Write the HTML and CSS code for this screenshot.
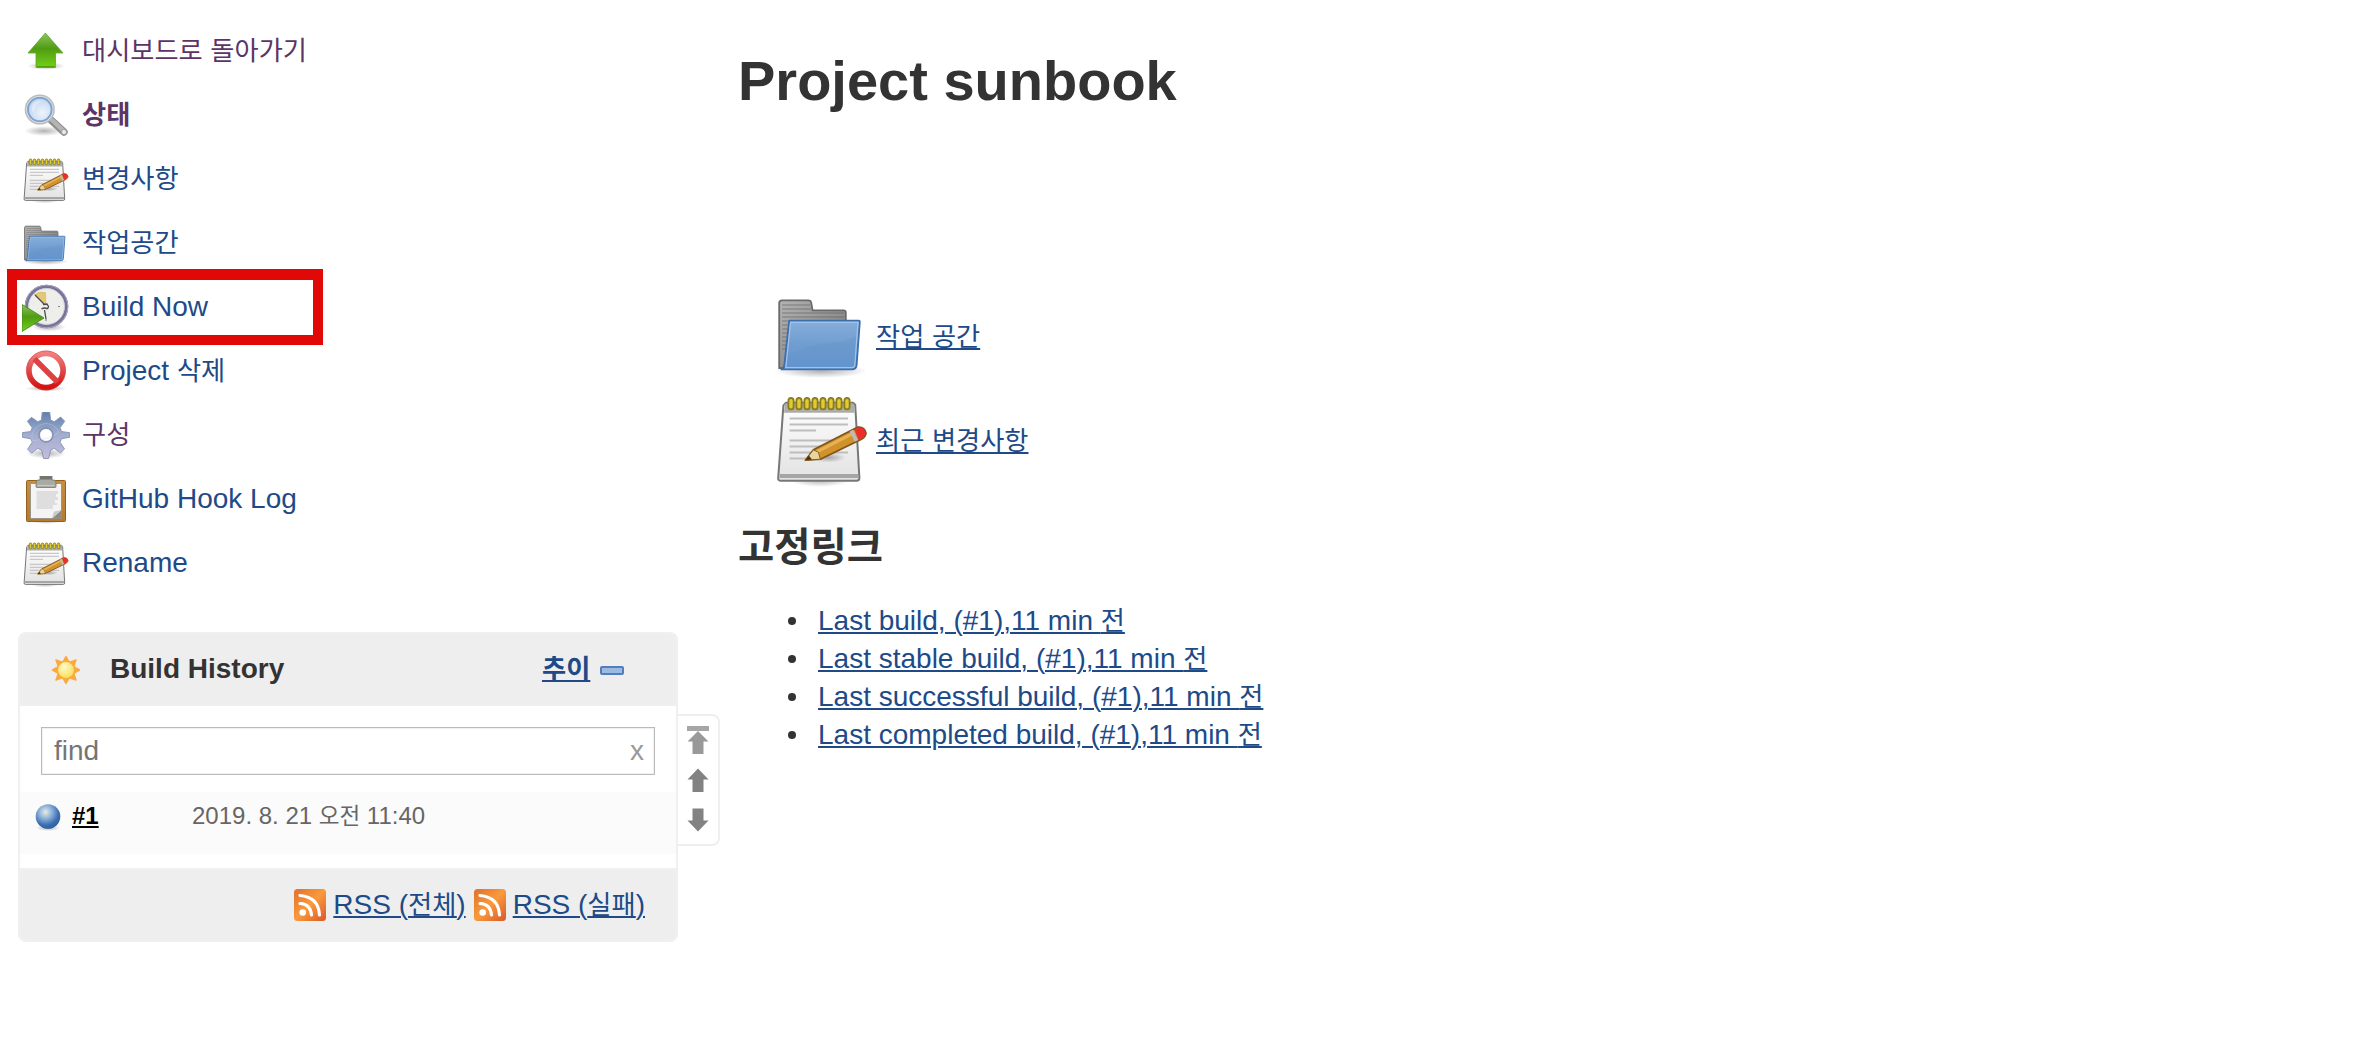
FILE: index.html
```html
<!DOCTYPE html>
<html lang="ko">
<head>
<meta charset="utf-8">
<title>sunbook [Jenkins]</title>
<link rel="stylesheet" href="styles.css">
</head>
<body>
<svg class="defs" aria-hidden="true">
  <defs>
    <linearGradient id="green" x1="0" y1="0" x2="0" y2="1"><stop offset="0" stop-color="#8fc45f"/><stop offset=".45" stop-color="#4f9c13"/><stop offset="1" stop-color="#72d216"/></linearGradient>
    <linearGradient id="blue" x1="0" y1="0" x2="0" y2="1"><stop offset="0" stop-color="#86aedb"/><stop offset=".5" stop-color="#709dd0"/><stop offset="1" stop-color="#6496cf"/></linearGradient>
    <linearGradient id="grey" x1="0" y1="0" x2="1" y2="1"><stop offset="0" stop-color="#b4b4b4"/><stop offset="1" stop-color="#737373"/></linearGradient>
    <linearGradient id="paper" x1="0" y1="0" x2="0" y2="1"><stop offset="0" stop-color="#ffffff"/><stop offset="1" stop-color="#e2e2e2"/></linearGradient>
    <linearGradient id="red" x1="0" y1="0" x2="0" y2="1"><stop offset="0" stop-color="#f08080"/><stop offset=".5" stop-color="#e04848"/><stop offset="1" stop-color="#d31212"/></linearGradient>
    <linearGradient id="gearfill" x1="0" y1="0" x2="0" y2="1"><stop offset="0" stop-color="#5f7fab"/><stop offset=".5" stop-color="#a3afd0"/><stop offset="1" stop-color="#c4bbdc"/></linearGradient>
    <linearGradient id="wood" x1="0" y1="0" x2="0" y2="1"><stop offset="0" stop-color="#c88f40"/><stop offset="1" stop-color="#b57a2c"/></linearGradient>
    <linearGradient id="rssfill" x1="0" y1="0" x2="1" y2="1"><stop offset="0" stop-color="#e0702e"/><stop offset=".5" stop-color="#f99a3c"/><stop offset="1" stop-color="#d9572a"/></linearGradient>
    <radialGradient id="lens" cx=".6" cy=".65" r=".7"><stop offset="0" stop-color="#eef4fc"/><stop offset="1" stop-color="#bcd3ee"/></radialGradient>
    <radialGradient id="ball" cx=".4" cy=".32" r=".7"><stop offset="0" stop-color="#e6eddf"/><stop offset=".35" stop-color="#94b6dc"/><stop offset=".75" stop-color="#3b70b3"/><stop offset="1" stop-color="#2f5d9a"/></radialGradient>
    <radialGradient id="sunfill" cx=".4" cy=".35" r=".7"><stop offset="0" stop-color="#fffbc8"/><stop offset="1" stop-color="#f8dc4c"/></radialGradient>
    <radialGradient id="shade"><stop offset="0" stop-color="#000" stop-opacity=".3"/><stop offset="1" stop-color="#000" stop-opacity="0"/></radialGradient>
  </defs>

  <symbol id="up" viewBox="0 0 48 48">
    <ellipse cx="24" cy="38" rx="19" ry="4" fill="url(#shade)"/>
    <path d="M23.400 5 41 25H33.500V39.500H14V25H6Z" fill="url(#green)" stroke="#5fa52c" stroke-width=".8" stroke-linejoin="round"/>
    <path d="M15 38.700H32.500" stroke="#4e9a06" stroke-width="1.200"/>
  </symbol>

  <symbol id="search" viewBox="0 0 48 48">
    <ellipse cx="22" cy="39" rx="20" ry="5" fill="url(#shade)"/>
    <path d="M29 28 42 40" stroke="#8e8e8e" stroke-width="7.400" stroke-linecap="round"/>
    <path d="M30 28 41.500 39" stroke="#b5b5b5" stroke-width="4.400" stroke-linecap="round"/>
    <circle cx="42" cy="40" r="2.500" fill="#ededed" stroke="#999" stroke-width=".8"/>
    <circle cx="17.800" cy="17.500" r="14.300" fill="#e9e9e9" stroke="#bcbcbc" stroke-width="1.600"/>
    <circle cx="17.800" cy="17.500" r="11.800" fill="url(#lens)" stroke="#7da3d4" stroke-width="2"/>
    <path d="M9.500 17C9.500 11 14.500 8 19.500 9.500 13.500 12 12.500 15 12 22Z" fill="#fff" opacity=".35"/>
  </symbol>

  <symbol id="notepad" viewBox="0 0 48 48">
    <ellipse cx="23" cy="44" rx="15" ry="3.500" fill="url(#shade)"/>
    <path d="M6 5.400H39.500L40.600 6.400 42.700 43Q42.700 44.400 41.300 44.400H3.500Q2 44.400 2.100 43L4.700 6.700Z" fill="url(#paper)" stroke="#777" stroke-width="1"/>
    <path d="M5.400 5.900H40L40.300 10.400H5Z" fill="#adada8"/>
    <path d="M2.900 41H42V43H2.800Z" fill="#a5a5a5"/>
    <g stroke="#bdbdbd" stroke-width="1"><path d="M7.800 13.300H37M7.800 16.300H37M7.800 19.300H21M7.800 24.300H37M7.800 27.300H32M7.800 30.300H37M7.800 33.300H24"/></g>
    <g fill="#dfcc35" stroke="#8d7c17" stroke-width=".9"><rect x="7.200" y="3" width="2.600" height="5.700" rx="1.300"/><rect x="11.200" y="3" width="2.600" height="5.700" rx="1.300"/><rect x="15.200" y="3" width="2.600" height="5.700" rx="1.300"/><rect x="19.200" y="3" width="2.600" height="5.700" rx="1.300"/><rect x="23.200" y="3" width="2.600" height="5.700" rx="1.300"/><rect x="27.200" y="3" width="2.600" height="5.700" rx="1.300"/><rect x="31.200" y="3" width="2.600" height="5.700" rx="1.300"/><rect x="35.200" y="3" width="2.600" height="5.700" rx="1.300"/></g>
    <ellipse cx="27" cy="32.800" rx="9" ry="2.500" fill="url(#shade)"/>
    <g transform="translate(-.8 -.9)">
      <path d="M16.500 35 20.500 29.800 42.500 18.500Q46 18 46.800 21.500 46.500 23.500 44.500 24.500L24 34.500Z" fill="#d1922c" stroke="#80541a" stroke-width=".9" stroke-linejoin="round"/>
      <path d="M22 31 41 21.200" stroke="#e8b254" stroke-width="1.600"/>
      <path d="M16.500 35 20.500 29.800 23 31 24 34.500Z" fill="#ead59c" stroke="#8b5d1c" stroke-width=".5"/>
      <path d="M16.500 35 18.200 32.600 19.800 34.600Z" fill="#4b3210"/>
      <path d="M39.500 20.200 42 25.400" stroke="#bcbcbc" stroke-width="1.800"/>
      <path d="M41 19.500 43.300 18.700Q46 18.600 46.500 21.500 46.300 23.200 43 24.800Z" fill="#ee2c2c"/>
    </g>
  </symbol>

  <symbol id="folder" viewBox="0 0 48 48">
    <ellipse cx="23.500" cy="41.500" rx="23" ry="3.500" fill="url(#shade)"/>
    <path d="M2.600 40V7.500Q2.600 6.200 4 6.200H17.200Q18.400 6.200 18.600 7.300L19.300 11.200H34.800Q35.900 11.200 35.900 12.200V20L35 40H4Z" fill="url(#grey)" stroke="#6a6a6a" stroke-width=".9"/>
    <path d="M4 8.500H18M4 10.500H18.500M4 12.500H35M4 14.500H35M4 16.500H7M4 18.500H7M4 20.500H7M4 22.500H7M4 24.500H7M4 26.500H6M4 28.500H6M4 30.500H6" stroke="#5c5c5c" stroke-width=".5" opacity=".6"/>
    <path d="M7.600 16.300H42.400Q43 16.300 42.900 17L41.300 38.700Q41 40.700 39 40.700H3.700Q5 40.200 5.200 38.300Z" fill="url(#blue)" stroke="#3b6fae" stroke-width=".9" stroke-linejoin="round"/>
    <path d="M8.300 17.200H42L40.400 38.600Q40.100 39.800 39 39.800H5.900Z" fill="none" stroke="#a5c3e6" stroke-width=".6"/>
    <path d="M7 33C17 30 20 28 28 27.500 34 27 38 26 41 24L40 38Q40 39.500 38 39.500H6.500Z" fill="#5a8dca" opacity=".22"/>
  </symbol>

  <symbol id="clock" viewBox="0 0 48 48">
    <ellipse cx="27" cy="43" rx="17" ry="4.500" fill="url(#shade)"/>
    <circle cx="24.500" cy="22.500" r="20" fill="#eeeeea" stroke="#77739a" stroke-width="3.600"/>
    <circle cx="24.500" cy="22.500" r="21.300" fill="none" stroke="#a9a7bd" stroke-width="1"/>
    <circle cx="24.500" cy="22.500" r="17.900" fill="none" stroke="#cfcfd4" stroke-width=".8"/>
    <path d="M12.500 10.500Q18 7 23.500 8.500L24 21.500Z" fill="#e3c976" stroke="#cfb055" stroke-width=".5"/>
    <path d="M13 11 22 20M21 20.500l4-.5 1.500 2.500-1 2.500M25.500 25q-3-2-6 0M22.500 26l1.500 9" fill="none" stroke="#4a4a4a" stroke-width="1.300"/>
    <path d="M36 22.500h2M24 35v2" stroke="#888" stroke-width="1.200"/>
    <path d="M0 20.500V47.500L22 34Z" fill="url(#green)" stroke="#4a8c1c" stroke-width=".9"/>
  </symbol>

  <symbol id="stop" viewBox="0 0 48 48">
    <ellipse cx="24" cy="40.500" rx="21" ry="3" fill="url(#shade)"/>
    <circle cx="24" cy="22.500" r="17" fill="#fff" stroke="url(#red)" stroke-width="5.500"/>
    <path d="M12.500 11 35.500 34" stroke="#dd4242" stroke-width="5.500"/>
    <circle cx="24" cy="22.500" r="19.600" fill="none" stroke="#d44" stroke-width=".6"/>
  </symbol>

  <symbol id="gear" viewBox="0 0 48 48">
    <ellipse cx="24" cy="41.500" rx="20" ry="5" fill="url(#shade)"/>
    <path fill-rule="evenodd" d="M20.300 0H27.700L28.700 8.200 32.300 9.700 38.600 5 42.700 9.200 38 15.800 39.500 19.500 47.700 20.700V25.300L39.500 26.700 38 30.300 42.500 36.800 38.500 41 32.300 36.300 28.700 38 26.600 46.500H21.600L19.500 38 15.700 36.300 9.600 41.200 5.600 37.200 10.200 30.300 8.600 26.700.3 25.300V20.700L8.600 19.500 10.200 15.800 5.400 9.300 9.400 5.300 15.700 9.700 19.400 8.200ZM24 16.500A6.500 6.500 0 1 0 24 29.500 6.500 6.500 0 1 0 24 16.500Z" fill="url(#gearfill)" stroke="#8392b4" stroke-width=".9" stroke-linejoin="round"/>
    <path d="M10 22Q14 12 24 11.500 33 12 37 20 30 27 10 29Z" fill="none" stroke="#c7d0e4" stroke-width=".7" opacity=".6"/>
    <circle cx="24" cy="23" r="7.200" fill="none" stroke="#8089ac" stroke-width="1"/>
  </symbol>

  <symbol id="clipboard" viewBox="0 0 48 48">
    <ellipse cx="24" cy="45" rx="17" ry="3" fill="url(#shade)"/>
    <rect x="4.500" y="4.500" width="39" height="41" rx="1" fill="url(#wood)" stroke="#93601e" stroke-width="1"/>
    <path d="M8.500 7.500H39.500V42.500H8.500Z" fill="#f4f4f4" stroke="#858585" stroke-width=".7"/>
    <path d="M14.500 15H36V18H34V21H36V24H33V27H35V29H31V33H14.500Z" fill="#dedede"/>
    <path d="M30 42.500 39.500 34V42.500Z" fill="#8c8c80"/>
    <path d="M30 42.500 32 35.500 39.500 34Z" fill="#c9c9c9"/>
    <path d="M18 0H30V4H32Q34 4 34 7V10.500Q34 11.500 33 11.500H15Q14 11.500 14 10.500V7Q14 4 16 4H18Z" fill="#a8aaa3" stroke="#73756d" stroke-width=".8"/>
    <path d="M18 0H30V3.500H18Z" fill="#74766d"/>
    <path d="M15.500 9.500H32.500" stroke="#c7c9c2" stroke-width="1.200"/>
  </symbol>

  <symbol id="sun" viewBox="0 0 30 30">
    <path d="M15 1.500 17.500 6 12.500 6ZM15 28.500 17.500 24 12.500 24ZM1.500 15 6 12.500 6 17.500ZM28.500 15 24 12.500 24 17.500ZM5 5 10.500 7 7 10.500ZM25 5 23 10.500 19.500 7ZM5 25 7 19.500 10.500 23ZM25 25 19.500 23 23 19.500Z" fill="#fba940" stroke="#fba940" stroke-width="1.500" stroke-linejoin="round"/>
    <circle cx="15" cy="15" r="8.800" fill="url(#sunfill)" stroke="#fbac3e" stroke-width="1.800"/>
  </symbol>

  <symbol id="orb" viewBox="0 0 28 28">
    <ellipse cx="14" cy="25" rx="12" ry="3" fill="url(#shade)"/>
    <circle cx="14" cy="13.500" r="12.300" fill="url(#ball)"/>
  </symbol>

  <symbol id="rss" viewBox="0 0 32 32">
    <rect width="32" height="32" rx="3.500" fill="url(#rssfill)"/>
    <circle cx="8.700" cy="23.500" r="3.300" fill="#fff"/>
    <path d="M6 14.500Q16.500 15 17.500 26M6 6.500Q24.500 8 25.500 26" fill="none" stroke="#fff" stroke-width="3.200" stroke-linecap="round"/>
  </symbol>
</svg>

<div class="page">
  <aside class="side">
    <nav class="tasks">
      <a class="task visited" href="#"><svg class="icon"><use href="#up"/></svg><span class="label"><span class="ko">대시보드로 돌아가기</span></span></a>
      <a class="task visited current" href="#"><svg class="icon"><use href="#search"/></svg><span class="label"><span class="ko">상태</span></span></a>
      <a class="task" href="#"><svg class="icon"><use href="#notepad"/></svg><span class="label"><span class="ko">변경사항</span></span></a>
      <a class="task" href="#"><svg class="icon"><use href="#folder"/></svg><span class="label"><span class="ko">작업공간</span></span></a>
      <a class="task marked" href="#"><svg class="icon"><use href="#clock"/></svg><span class="label">Build Now</span></a>
      <a class="task" href="#"><svg class="icon"><use href="#stop"/></svg><span class="label">Project <span class="ko">삭제</span></span></a>
      <a class="task visited" href="#"><svg class="icon"><use href="#gear"/></svg><span class="label"><span class="ko">구성</span></span></a>
      <a class="task" href="#"><svg class="icon"><use href="#clipboard"/></svg><span class="label">GitHub Hook Log</span></a>
      <a class="task" href="#"><svg class="icon"><use href="#notepad"/></svg><span class="label">Rename</span></a>
    </nav>

    <div class="history">
      <section class="panel">
        <header class="panel-head">
          <svg class="sun"><use href="#sun"/></svg>
          <h2 class="panel-title">Build History</h2>
          <a class="trend" href="#"><span class="ko">추이</span></a>
          <span class="collapse"></span>
        </header>
        <div class="find"><span>find</span><span class="clear">x</span></div>
        <div class="build">
          <svg class="orb"><use href="#orb"/></svg>
          <a class="number" href="#">#1</a>
          <span class="date">2019. 8. 21 <span class="ko">오전</span> 11:40</span>
        </div>
        <footer class="panel-foot">
          <svg class="rss"><use href="#rss"/></svg><a class="feed" href="#">RSS (<span class="ko">전체</span>)</a>
          <svg class="rss"><use href="#rss"/></svg><a class="feed" href="#">RSS (<span class="ko">실패</span>)</a>
        </footer>
      </section>
      <div class="pager">
        <svg width="24" height="30" viewBox="0 0 24 30"><path d="M1 1H23V6H1Z" fill="#a6a6a6"/><path d="M12 6 22.500 16.500H17.500V29H6.500V16.500H1.500Z" fill="#999"/></svg>
        <svg width="24" height="24" viewBox="0 0 24 24"><path d="M12 .5 22.500 11.500H17.500V24H6.500V11.500H1.500Z" fill="#828282"/></svg>
        <svg width="24" height="24" viewBox="0 0 24 24"><path d="M12 23.500 22.500 12.500H17.500V.5H6.500V12.500H1.500Z" fill="#828282"/></svg>
      </div>
    </div>
  </aside>

  <main class="main">
    <h1 class="title">Project sunbook</h1>
    <div class="shortcuts">
      <div class="shortcut"><svg class="big"><use href="#folder"/></svg><a href="#"><span class="ko">작업 공간</span></a></div>
      <div class="shortcut"><svg class="big"><use href="#notepad"/></svg><a href="#"><span class="ko">최근 변경사항</span></a></div>
    </div>
    <h2 class="subtitle"><span class="ko">고정링크</span></h2>
    <ul class="permalinks">
      <li><a href="#">Last build, (#1),11 min <span class="ko">전</span></a></li>
      <li><a href="#">Last stable build, (#1),11 min <span class="ko">전</span></a></li>
      <li><a href="#">Last successful build, (#1),11 min <span class="ko">전</span></a></li>
      <li><a href="#">Last completed build, (#1),11 min <span class="ko">전</span></a></li>
    </ul>
  </main>
</div>
</body>
</html>
```
FILE: styles.css
```css
*, *::before, *::after { box-sizing: border-box; }

body {
  margin: 0;
  background: #fff;
  color: #333;
  font: 28px/38px "Liberation Sans", "Noto Sans CJK KR", sans-serif;
}

a { color: #204a87; text-decoration-thickness: 2px; text-underline-offset: 2px; }
h1, h2, ul { margin: 0; padding: 0; }
svg { display: block; flex: none; }

.defs { position: absolute; width: 0; height: 0; }

/* Hangul is set slightly smaller than the Latin text beside it */
.ko { font-size: .938em; line-height: 1; word-spacing: .3px; }

.page { display: flex; }
.side { width: 738px; padding-top: 20px; flex: none; }

/* Task list */
.tasks { display: flex; flex-direction: column; align-items: flex-start; padding-left: 22px; }
.task { display: flex; align-items: center; gap: 12px; height: 64px; text-decoration: none; white-space: nowrap; }
.task.visited { color: #5c3566; }
.task.current { font-weight: bold; }
.icon { width: 48px; height: 48px; }
.label { padding-bottom: 3px; }

.marked { position: relative; }
.marked::after {
  content: "";
  position: absolute;
  left: -15px;
  top: -7px;
  width: 316px;
  height: 76px;
  border: 10px solid #e10808;
  border-top-width: 11px;
}

/* Build history */
.history { display: flex; align-items: flex-start; padding: 36px 0 0 18px; }
.panel { width: 660px; border: 2px solid #f0f0f0; border-radius: 8px; overflow: hidden; }
.panel-head {
  display: flex;
  align-items: center;
  height: 72px;
  padding-left: 31px;
  background: #eee;
  border-bottom: 2px solid #f0f0f0;
}
.sun { width: 30px; height: 30px; margin-top: 2px; }
.panel-title { margin-left: 29px; font-size: 28px; line-height: 38px; width: 432px; padding-bottom: 1px; }
.trend { font-weight: bold; padding-bottom: 1px; }
.collapse {
  width: 24px;
  height: 9px;
  margin: 2px 0 0 10px;
  border: 2px solid #4f7fbd;
  border-radius: 2px;
  background: #9dbbe0;
}
.find {
  display: flex;
  justify-content: space-between;
  height: 48px;
  margin: 21px 21px 17px;
  padding: 4px 10px 0 12px;
  border: 1px solid #bbb;
  box-shadow: inset 0 0 0 1px #f0f0f0;
  color: #757575;
}
.clear { color: #999; }
.build { display: flex; height: 62px; margin-bottom: 14px; padding-left: 14px; background: #fbfbfb; font-size: 24px; line-height: 48px; }
.orb { width: 28px; height: 28px; margin: 11px 10px 0 0; }
.number { width: 120px; color: #000; font-weight: bold; }
.date { color: #666; }
.panel-foot {
  display: flex;
  align-items: center;
  justify-content: flex-end;
  height: 72px;
  padding-right: 31px;
  background: #eee;
  border-top: 2px solid #f0f0f0;
}
.rss { width: 32px; height: 32px; margin-right: 7px; }
.feed { padding-bottom: 1px; }
.feed + .rss { margin-left: 8px; }

.pager {
  display: flex;
  flex-direction: column;
  align-items: center;
  width: 42px;
  height: 132px;
  margin-top: 82px;
  padding-top: 9px;
  gap: 13px;
  border: 2px solid #efefef;
  border-left: 0;
  border-radius: 0 8px 8px 0;
}
.pager svg + svg + svg { margin-top: 3px; }

/* Project page */
.main { padding-top: 49px; }
.title { font-size: 56px; line-height: 64px; }
.shortcuts { display: flex; flex-direction: column; gap: 8px; padding: 175px 0 0 36px; }
.shortcut { display: flex; align-items: center; gap: 6px; }
.shortcut a { padding-top: 2px; }
.big { width: 96px; height: 96px; }
.subtitle { margin-top: 35px; font-size: 42px; line-height: 48px; }
.permalinks { margin-top: 31px; padding-left: 50px; list-style: none; }
.permalinks li { display: flex; align-items: center; gap: 22px; height: 38px; }
.permalinks li::before { content: ""; width: 8px; height: 8px; border-radius: 50%; background: #333; }
```
